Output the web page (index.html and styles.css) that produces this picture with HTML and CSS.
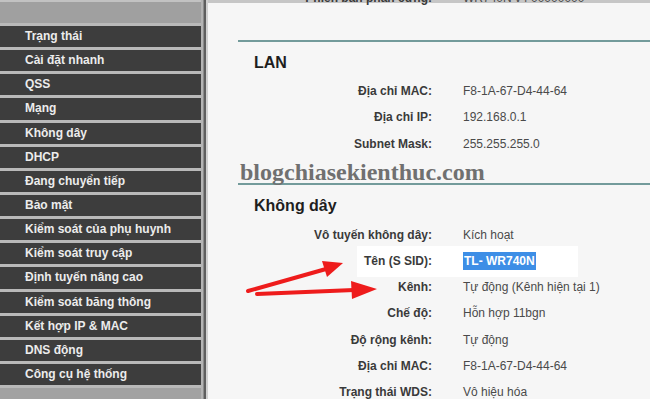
FILE: index.html
```html
<!DOCTYPE html>
<html lang="vi">
<head>
  <meta charset="UTF-8" />
  <title>Trạng thái</title>
  <link rel="stylesheet" href="styles.css">
</head>
<body>
  <!-- Left menu -->
  <div class="sidebar">
    <div class="menu-head"></div>
    <ul class="menu">
      <li>Trạng thái</li>
      <li>Cài đặt nhanh</li>
      <li>QSS</li>
      <li>Mạng</li>
      <li>Không dây</li>
      <li>DHCP</li>
      <li>Đang chuyển tiếp</li>
      <li>Bảo mật</li>
      <li>Kiểm soát của phụ huynh</li>
      <li>Kiểm soát truy cập</li>
      <li>Định tuyến nâng cao</li>
      <li>Kiểm soát băng thông</li>
      <li>Kết hợp IP &amp; MAC</li>
      <li>DNS động</li>
      <li>Công cụ hệ thống</li>
    </ul>
  </div>
  <div class="divider"></div>

  <!-- Status content -->
  <div class="content">
    <div class="info hw-row">
      <span class="label">Phiên bản phần cứng:</span>
      <span class="value">WR740N v4 00000000</span>
    </div>

    <hr class="rule">
    <div class="section">
      <h2>LAN</h2>
      <div class="info">
        <span class="label">Địa chỉ MAC:</span>
        <span class="value">F8-1A-67-D4-44-64</span>
        <span class="label">Địa chỉ IP:</span>
        <span class="value">192.168.0.1</span>
        <span class="label">Subnet Mask:</span>
        <span class="value">255.255.255.0</span>
      </div>
    </div>

    <hr class="rule rule-2">
    <div class="section">
      <h2>Không dây</h2>
      <div class="info">
        <span class="label">Vô tuyến không dây:</span>
        <span class="value">Kích hoạt</span>
        <span class="label">Tên (S SID):</span>
        <span class="value"><span class="selected">TL- WR740N</span></span>
        <span class="label">Kênh:</span>
        <span class="value">Tự động (Kênh hiện tại 1)</span>
        <span class="label">Chế độ:</span>
        <span class="value">Hỗn hợp 11bgn</span>
        <span class="label">Độ rộng kênh:</span>
        <span class="value">Tự động</span>
        <span class="label">Địa chỉ MAC:</span>
        <span class="value">F8-1A-67-D4-44-64</span>
        <span class="label">Trạng thái WDS:</span>
        <span class="value">Vô hiệu hóa</span>
      </div>
    </div>

    <!-- overlays: glare patch, watermark, red arrows -->
    <div class="glare"></div>
    <div class="watermark">blogchiasekienthuc.com</div>
    <svg class="arrows" width="140" height="60" viewBox="0 0 140 60">
      <line x1="8" y1="41" x2="86" y2="19" stroke="#ee1c1c" stroke-width="4" stroke-linecap="round"/>
      <polygon points="103,13 82,11 87,27" fill="#ee1c1c"/>
      <line x1="17" y1="44" x2="114" y2="40" stroke="#ee1c1c" stroke-width="4" stroke-linecap="round"/>
      <polygon points="137,39 111,31 112,49" fill="#ee1c1c"/>
    </svg>
  </div>
</body>
</html>
```

FILE: styles.css
```css
body {
  margin: 0;
  width: 650px;
  height: 399px;
  overflow: hidden;
  display: flex;
  font-family: "Liberation Sans", Arial, sans-serif;
  font-size: 12px;
}
/* Left menu */
.sidebar {
  width: 201px;
  flex-shrink: 0;
  background: #a2a2a2;
}
.menu-head {
  height: 21px;
  border-top: 2px solid #c2c2c2;
  background: #a0a0a0;
}
.menu {
  list-style: none;
  margin: 0;
  padding: 0;
  border-bottom: 3px solid #b9b9b9;
}
.menu li {
  height: 21.15px;
  line-height: 21px;
  border-top: 3px solid #b9b9b9;
  background: #3d3d3d;
  color: #ececec;
  font-weight: bold;
  padding-left: 25px;
  white-space: nowrap;
}
.divider {
  width: 7px;
  flex-shrink: 0;
  background: linear-gradient(to right, #b4b4b4 0 2px, #8c8c8c 2px 3px, #5e5e5e 3px 5px, #d0d0d0 5px 7px);
}
/* Main content */
.content {
  flex: 1;
  position: relative;
  padding-left: 30px;
  background: linear-gradient(#c6c6c6 0 3px, #f6f6f6 3px);
}
.rule {
  border: 0;
  height: 2px;
  margin: 29px 0 0;
  background: #739b9b;
}
.rule-2 {
  margin-top: 26px;
}
.section {
  padding-left: 16px;
  position: relative;
  z-index: 1;
}
.section h2 {
  margin: 11px 0 5px;
  font-size: 16px;
  line-height: 20px;
  color: #1e1e1e;
}
.rule-2 + .section h2 {
  margin-bottom: 6px;
}
.info {
  display: grid;
  grid-template-columns: 178px 1fr;
  column-gap: 31px;
  grid-auto-rows: 26.2px;
  align-items: center;
}
.hw-row {
  margin-top: -15px;
  padding-left: 16px;
}
.label {
  text-align: right;
  font-weight: bold;
  color: #3a3a3a;
  white-space: nowrap;
}
.value {
  color: #4a4a4a;
  white-space: nowrap;
}
.selected {
  background: #3d8ee6;
  color: #fff;
  font-weight: bold;
  padding: 2px 1px;
}
.glare {
  position: absolute;
  left: 149px;
  top: 246px;
  width: 221px;
  height: 31px;
  background: #fff;
}
.watermark {
  position: absolute;
  left: 32px;
  top: 160px;
  font-family: "Liberation Serif", "Times New Roman", serif;
  font-weight: bold;
  font-size: 24px;
  line-height: 24px;
  color: #707070;
  z-index: 2;
}
.arrows {
  position: absolute;
  left: 32px;
  top: 250px;
  z-index: 3;
}
```
